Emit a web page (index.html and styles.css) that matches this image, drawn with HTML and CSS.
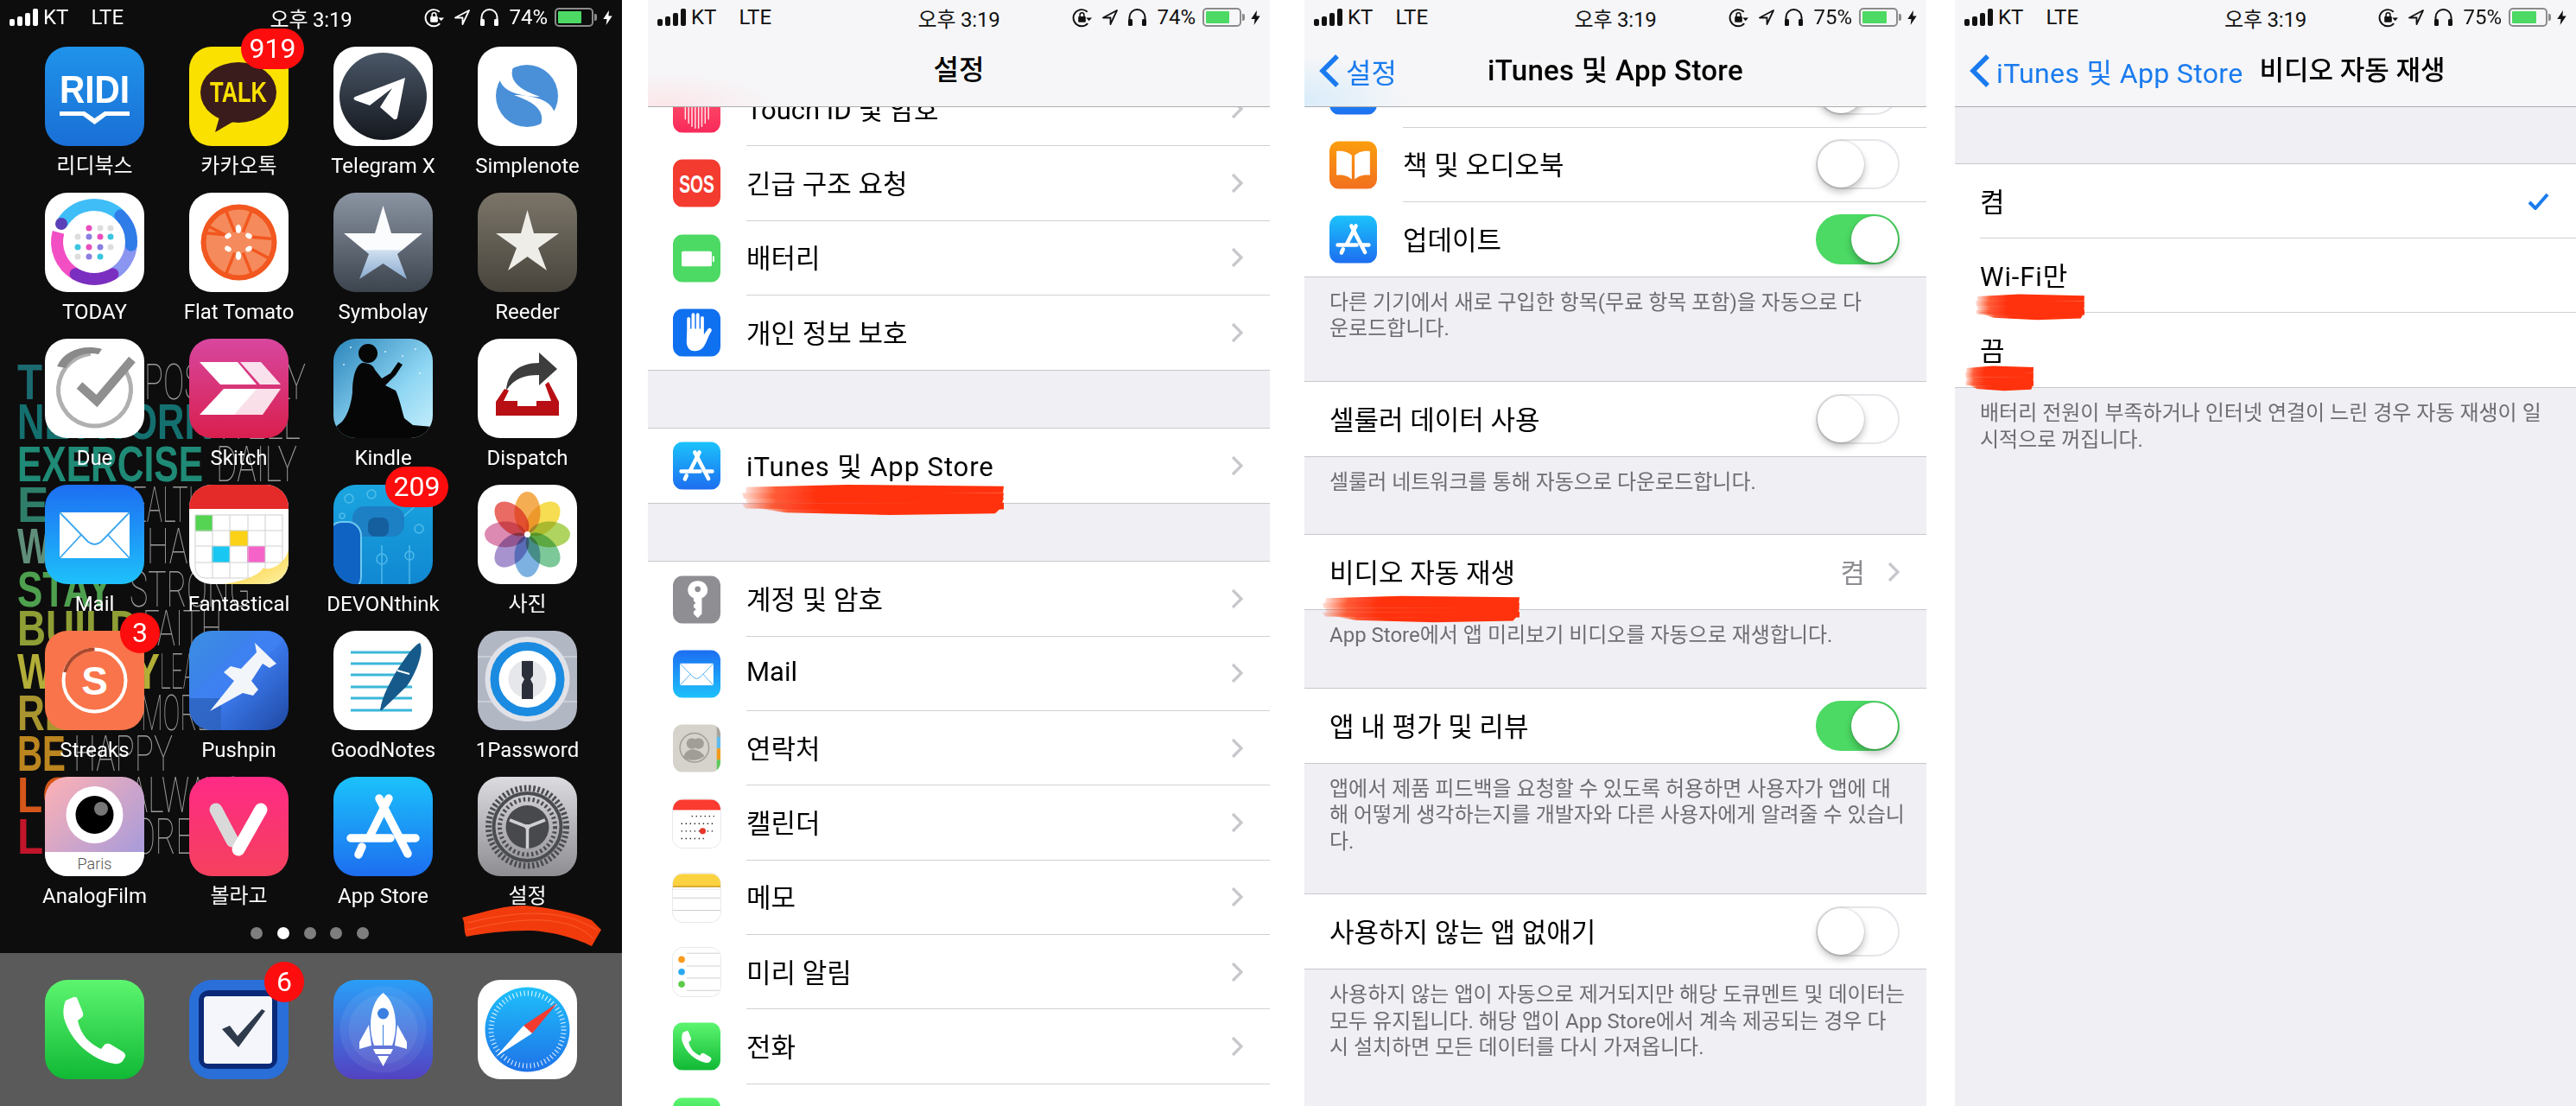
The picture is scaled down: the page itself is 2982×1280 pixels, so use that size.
FILE: index.html
```html
<!DOCTYPE html>
<html lang="ko">
<head>
<meta charset="utf-8">
<title>iOS 비디오 자동 재생 설정</title>
<link rel="stylesheet" href="styles.css">
</head>
<body>
<svg class="sprite" width="0" height="0" aria-hidden="true">
<defs>
<linearGradient id="g-ridi" x1="0" y1="0" x2="0" y2="1"><stop offset="0" stop-color="#1f93ea"/><stop offset="1" stop-color="#1a6fd6"/></linearGradient>
<linearGradient id="g-tg" x1="0" y1="0" x2="0" y2="1"><stop offset="0" stop-color="#4a5768"/><stop offset="1" stop-color="#15181e"/></linearGradient>
<linearGradient id="g-sym" x1="0" y1="0" x2="0" y2="1"><stop offset="0" stop-color="#8b94a2"/><stop offset="1" stop-color="#3c444e"/></linearGradient>
<linearGradient id="g-symstar" x1="0" y1="0" x2="0" y2="1"><stop offset=".6" stop-color="#fbfcfe"/><stop offset=".61" stop-color="#cfdfef"/><stop offset="1" stop-color="#8aaad0"/></linearGradient>
<linearGradient id="g-reed" x1="0" y1="0" x2="0" y2="1"><stop offset="0" stop-color="#7b7569"/><stop offset="1" stop-color="#48443c"/></linearGradient>
<linearGradient id="g-skitch" x1="0" y1="0" x2="0" y2="1"><stop offset="0" stop-color="#d8479f"/><stop offset="1" stop-color="#d91f4e"/></linearGradient>
<linearGradient id="g-kindle" x1="0" y1="0" x2="1" y2="1"><stop offset="0" stop-color="#2a84ba"/><stop offset=".6" stop-color="#8fd6f3"/><stop offset="1" stop-color="#c8f0fb"/></linearGradient>
<linearGradient id="g-mail" x1="0" y1="0" x2="0" y2="1"><stop offset="0" stop-color="#1d6ef2"/><stop offset="1" stop-color="#1ec1fb"/></linearGradient>
<linearGradient id="g-devon" x1="0" y1="0" x2="0" y2="1"><stop offset="0" stop-color="#1aa5df"/><stop offset="1" stop-color="#1088d2"/></linearGradient>
<linearGradient id="g-pin" x1="0" y1="0" x2="1" y2="1"><stop offset="0" stop-color="#3b8fe2"/><stop offset=".5" stop-color="#3c7bef"/><stop offset="1" stop-color="#1f48a2"/></linearGradient>
<linearGradient id="g-analog" x1="0" y1="0" x2="1" y2="1"><stop offset="0" stop-color="#ffb1b4"/><stop offset="1" stop-color="#9b98e0"/></linearGradient>
<linearGradient id="g-vllo" x1="0" y1="0" x2="0" y2="1"><stop offset="0" stop-color="#ff2a85"/><stop offset="1" stop-color="#f5415e"/></linearGradient>
<linearGradient id="g-app" x1="0" y1="0" x2="0" y2="1"><stop offset="0" stop-color="#1bc2fb"/><stop offset="1" stop-color="#1d6ef0"/></linearGradient>
<linearGradient id="g-set" x1="0" y1="0" x2="0" y2="1"><stop offset="0" stop-color="#dcdce0"/><stop offset="1" stop-color="#8d8d92"/></linearGradient>
<linearGradient id="g-phone" x1="0" y1="0" x2="0" y2="1"><stop offset="0" stop-color="#5df570"/><stop offset="1" stop-color="#10b935"/></linearGradient>
<linearGradient id="g-launch" x1="0" y1="0" x2="0" y2="1"><stop offset="0" stop-color="#2a9ef7"/><stop offset="1" stop-color="#5342c2"/></linearGradient>
<linearGradient id="g-safari" x1="0" y1="0" x2="0" y2="1"><stop offset="0" stop-color="#1fc0fa"/><stop offset="1" stop-color="#1e72e8"/></linearGradient>
<linearGradient id="g-books" x1="0" y1="0" x2="0" y2="1"><stop offset="0" stop-color="#fb9e0e"/><stop offset="1" stop-color="#f2701e"/></linearGradient>
<linearGradient id="g-curl" x1="0" y1="0" x2="1" y2="1"><stop offset="0" stop-color="#f7c71c"/><stop offset="1" stop-color="#fff2a8"/></linearGradient>
<linearGradient id="g-touch" x1="0" y1="0" x2="0" y2="1"><stop offset="0" stop-color="#ff5a6e"/><stop offset="1" stop-color="#f8295a"/></linearGradient>
<linearGradient id="g-fade" x1="0" y1="0" x2="1" y2="0"><stop offset="0" stop-color="#ff3208" stop-opacity=".15"/><stop offset=".12" stop-color="#ff3208" stop-opacity=".8"/><stop offset=".28" stop-color="#ff3208"/><stop offset="1" stop-color="#ff3208"/></linearGradient>
<filter id="f-soft"><feGaussianBlur stdDeviation=".7"/></filter>
</defs>

<symbol id="i-ridi" viewBox="0 0 115 115"><rect width="115" height="115" fill="url(#g-ridi)"/><text x="17" y="65" textLength="81" lengthAdjust="spacingAndGlyphs" class="logo-bold" font-size="44" fill="#fff">RIDI</text><path d="M17 75H46L57.5 83 69 75H98V80H71L57.5 90 44 80H17Z" fill="#fff"/></symbol>
<symbol id="i-kakao" viewBox="0 0 115 115"><rect width="115" height="115" fill="#fae100"/><ellipse cx="57" cy="53" rx="44" ry="35" fill="#3b1c1c"/><path d="M36 78 30 99 54 85Z" fill="#3b1c1c"/><text x="24" y="64" textLength="66" lengthAdjust="spacingAndGlyphs" class="logo-bold" font-size="33" fill="#fae100">TALK</text></symbol>
<symbol id="i-telegram" viewBox="0 0 115 115"><rect width="115" height="115" fill="#fff"/><circle cx="57.5" cy="57.5" r="50.5" fill="url(#g-tg)"/><path d="M83 36 25 58Q22 60 25 62L42 68 68 48 54 70 70 84Q73 85 74 82Z" fill="#fff"/></symbol>
<symbol id="i-simple" viewBox="0 0 115 115"><rect width="115" height="115" fill="#fff"/><circle cx="57" cy="57" r="36" fill="#4a90d9"/><path d="M15 12H50C40 20 36 32 44 42 50 50 62 54 72 58 50 58 32 52 27 42 24 36 24 32 27 28Z" fill="#fff"/><path d="M15 12H50C40 20 36 32 44 42 50 50 62 54 72 58 50 58 32 52 27 42 24 36 24 32 27 28Z" fill="#fff" transform="rotate(180 57 57)"/></symbol>
<symbol id="i-today" viewBox="0 0 115 115"><rect width="115" height="115" fill="#fff"/><g fill="none" stroke-width="14"><path d="M19.8 35.5A43 43 0 0 1 87.4 26.6" stroke="#3fbdf7"/><path d="M99.8 60.7A43 43 0 0 1 78.5 94.2" stroke="#8a96f0"/><path d="M35.5 94.2A43 43 0 0 1 15.5 45.9" stroke="#f24fc4"/><path d="M87.4 26.6A43 43 0 0 1 99.8 60.7" stroke="#2f7be8" stroke-linecap="round"/><path d="M35.5 94.2A43 43 0 0 0 78.5 94.2" stroke="#7b2fc0" stroke-linecap="round"/></g><circle cx="19" cy="36" r="7" fill="#5a3fb8"/><circle cx="51" cy="41" r="3.5" fill="#e84fbd"/><circle cx="64" cy="41" r="3.5" fill="#ddd"/><circle cx="76" cy="41" r="3.5" fill="#ddd"/><circle cx="38" cy="51" r="3.5" fill="#ddd"/><circle cx="51" cy="51" r="3.5" fill="#8a7fe0"/><circle cx="64" cy="51" r="3.5" fill="#e84fbd"/><circle cx="76" cy="51" r="3.5" fill="#3cc5e0"/><circle cx="38" cy="63" r="3.5" fill="#3cc5e0"/><circle cx="51" cy="63" r="3.5" fill="#e84fbd"/><circle cx="64" cy="63" r="3.5" fill="#8a7fe0"/><circle cx="76" cy="63" r="3.5" fill="#ddd"/><circle cx="38" cy="74" r="3.5" fill="#ddd"/><circle cx="51" cy="74" r="3.5" fill="#8a7fe0"/><circle cx="64" cy="74" r="3.5" fill="#3cc5e0"/></symbol>
<symbol id="i-tomato" viewBox="0 0 115 115"><rect width="115" height="115" fill="#fff"/><circle cx="57.5" cy="57.5" r="44" fill="#f2571f"/><circle cx="57.5" cy="57.5" r="38" fill="#f58b5c"/><g stroke="#f2571f" stroke-width="3.5"><path d="M20 50H95" transform="rotate(5 57.5 50)"/><path d="M57.5 19V96" transform="rotate(22 57.5 57.5)"/><path d="M57.5 19V96" transform="rotate(-22 57.5 57.5)"/><path d="M57.5 19V96" transform="rotate(-62 57.5 57.5)"/></g><circle cx="57.5" cy="57.5" r="13" fill="#f58b5c"/><g fill="#fff"><ellipse cx="57" cy="42" rx="3.2" ry="5"/><ellipse cx="57" cy="73" rx="3.2" ry="5"/><ellipse cx="45" cy="50" rx="3" ry="4" transform="rotate(60 45 50)"/><ellipse cx="69" cy="50" rx="3" ry="4" transform="rotate(-60 69 50)"/><ellipse cx="45" cy="65" rx="3" ry="4" transform="rotate(-60 45 65)"/><ellipse cx="69" cy="65" rx="3" ry="4" transform="rotate(60 69 65)"/></g></symbol>
<symbol id="i-symbolay" viewBox="0 0 115 115"><rect width="115" height="115" fill="url(#g-sym)"/><path d="M57.5 15 67 47H103L74 71 85 100 57.5 82 30 100 41 71 12 47H48Z" fill="url(#g-symstar)"/></symbol>
<symbol id="i-reeder" viewBox="0 0 115 115"><rect width="115" height="115" fill="url(#g-reed)"/><path d="M57.5 20 65 47H94L70 64 80 90 57.5 74 35 90 45 64 21 47H50Z" fill="#efede8"/></symbol>
<symbol id="i-due" viewBox="0 0 115 115"><rect width="115" height="115" fill="#fff"/><circle cx="57.5" cy="59" r="42" fill="none" stroke="#b0b0b0" stroke-width="5" stroke-dasharray="215 50" transform="rotate(-30 57.5 59)"/><path d="M14 32C22 14 44 6 66 12L62 18C46 14 30 22 24 34Z" fill="#8a8a8a"/><path d="M40 54 60 72 101 24" fill="none" stroke="#8f8f8f" stroke-width="10"/></symbol>
<symbol id="i-skitch" viewBox="0 0 115 115"><rect width="115" height="115" fill="url(#g-skitch)"/><g fill="#fff"><path d="M12 27H56L78 53H36Z"/><path d="M59 27H83L106 53H82Z" opacity=".85"/><path d="M40 58H78L52 88H12Z"/><path d="M66 58H106L85 88H46Z" opacity=".85"/></g></symbol>
<symbol id="i-kindle" viewBox="0 0 115 115"><rect width="115" height="115" fill="url(#g-kindle)"/><g fill="#fff" opacity=".8"><circle cx="20" cy="10" r="1"/><circle cx="60" cy="15" r="1"/><circle cx="95" cy="12" r="1"/><circle cx="80" cy="20" r="1"/><circle cx="100" cy="40" r="1"/><circle cx="12" cy="30" r="1"/></g><circle cx="40" cy="17" r="11" fill="#060606"/><path d="M33 28C24 32 22 50 22 62 20 80 15 90 10 96L0 104V115H115V102L92 100 82 92C78 78 76 68 72 60L60 54 72 42 80 30 75 27 66 40 56 46 48 36C46 30 40 28 33 28Z" fill="#060606"/></symbol>
<symbol id="i-dispatch" viewBox="0 0 115 115"><rect width="115" height="115" fill="#fff"/><path d="M33 60C34 40 48 28 71 28V16L92 35 71 54V42C54 42 42 46 33 60Z" fill="#3d3d3d"/><path d="M31 58 21 73V89H94V73L82 50 78 53 85 72H68V78H46V72H30L36 60Z" fill="#b70f14"/></symbol>
<symbol id="i-mail" viewBox="0 0 115 115"><rect width="115" height="115" fill="url(#g-mail)"/><rect x="17" y="32" width="81" height="53" fill="#fff"/><path d="M17 32 50 66Q57.5 72 65 66L98 32M17 85 42 58M98 85 73 58" fill="none" stroke="#3ba6ee" stroke-width="1.8"/></symbol>
<symbol id="i-fantastical" viewBox="0 0 115 115"><rect width="115" height="115" fill="#fff"/><rect width="115" height="28" fill="#e52a2a"/><rect x="7" y="35" width="20" height="19" fill="#54d452"/><rect x="47" y="53" width="21" height="18" fill="#fbd218"/><rect x="26" y="71" width="21" height="19" fill="#18c8f2"/><rect x="67" y="71" width="21" height="19" fill="#f563c9"/><path d="M7 35H108V108M7 53H108M7 71H108M7 90H108M7 35V95Q7 108 20 108H90M27 35V108M47 35V108M68 35V108M88 35V108" fill="none" stroke="#cfcfcf" stroke-width="1"/><path d="M115 75C110 95 90 100 86 96 80 106 60 112 40 115H115Z" fill="url(#g-curl)"/></symbol>
<symbol id="i-devon" viewBox="0 0 115 115"><rect width="115" height="115" fill="url(#g-devon)"/><g fill="none" stroke="#5fc5ee" stroke-width="1.5" opacity=".8"><circle cx="18" cy="16" r="5"/><circle cx="44" cy="11" r="5"/><circle cx="10" cy="36" r="3"/><circle cx="99" cy="51" r="5"/><circle cx="56" cy="86" r="6"/><circle cx="88" cy="82" r="5"/><path d="M56 70V115M88 70V115M100 20 72 45"/></g><rect x="22" y="25" width="60" height="35" rx="14" fill="#1d7fc4"/><rect x="40" y="38" width="24" height="22" rx="8" fill="#155f9e"/><rect x="-6" y="43" width="38" height="80" rx="16" fill="#0f63c3" stroke="#6fc8f0" stroke-width="2"/></symbol>
<symbol id="i-photos" viewBox="0 0 115 115"><rect width="115" height="115" fill="#fff"/><g class="petals"><ellipse cx="57.5" cy="32" rx="15" ry="24" fill="#f4a23c"/><ellipse cx="57.5" cy="32" rx="15" ry="24" fill="#f5d93a" transform="rotate(45 57.5 57.5)"/><ellipse cx="57.5" cy="32" rx="15" ry="24" fill="#a6cf4b" transform="rotate(90 57.5 57.5)"/><ellipse cx="57.5" cy="32" rx="15" ry="24" fill="#6cc18a" transform="rotate(135 57.5 57.5)"/><ellipse cx="57.5" cy="32" rx="15" ry="24" fill="#6aa7dd" transform="rotate(180 57.5 57.5)"/><ellipse cx="57.5" cy="32" rx="15" ry="24" fill="#9b86c9" transform="rotate(225 57.5 57.5)"/><ellipse cx="57.5" cy="32" rx="15" ry="24" fill="#d87aa8" transform="rotate(270 57.5 57.5)"/><ellipse cx="57.5" cy="32" rx="15" ry="24" fill="#e8574e" transform="rotate(315 57.5 57.5)"/></g><circle cx="57.5" cy="57.5" r="3.5" fill="#fff"/></symbol>
<symbol id="i-streaks" viewBox="0 0 115 115"><rect width="115" height="115" fill="#f9744a"/><circle cx="57.5" cy="57.5" r="36" fill="none" stroke="#fff" stroke-width="4"/><path d="M23 48A36 36 0 0 1 57.5 21.5" fill="none" stroke="#a9482c" stroke-width="4"/><text x="57.5" y="74" text-anchor="middle" class="logo-bold" font-size="46" fill="#fff">S</text></symbol>
<symbol id="i-pushpin" viewBox="0 0 115 115"><rect width="115" height="115" fill="url(#g-pin)"/><path d="M0 78 78 0H115V5L5 115H0Z" fill="#3f82f2" opacity=".7"/><path d="M0 78H37V115H0Z" fill="#2d62bd" opacity=".8"/><path d="M76 14 101 38 93 43 85 38 72 58 80 68 74 75 62 72 24 93 52 58 40 48 48 41 60 44 78 25Z" fill="#f2f5fa"/></symbol>
<symbol id="i-goodnotes" viewBox="0 0 115 115"><rect width="115" height="115" fill="#fff"/><path d="M20 25H91M20 38H91M20 51H91M20 65H91M20 78H91M20 92H91" stroke="#3bb7d9" stroke-width="3"/><path d="M100 14C106 24 94 52 85 64L56 92 54 92C56 76 66 58 76 42 84 30 92 18 100 14Z" fill="#155a8a"/><path d="M74 46 88 50" stroke="#fff" stroke-width="2"/></symbol>
<symbol id="i-1pass" viewBox="0 0 115 115"><rect width="115" height="115" fill="#b2b7c4"/><path d="M0 30H115M0 82H115" stroke="#c9cdd6" stroke-width="2"/><circle cx="57.5" cy="56" r="49" fill="#e0e2e8"/><circle cx="57.5" cy="56" r="38" fill="#fff" stroke="#1a8be0" stroke-width="10"/><circle cx="57.5" cy="56" r="22" fill="#e6e7ea"/><path d="M51 35H64V52L61 56 64 62V79H51V62L54 56 51 52Z" fill="#2a2f3a"/></symbol>
<symbol id="i-analog" viewBox="0 0 115 115"><rect width="115" height="115" fill="url(#g-analog)"/><rect y="87" width="115" height="28" fill="#fff"/><circle cx="57.5" cy="44" r="33" fill="#fff"/><circle cx="57.5" cy="44" r="22" fill="#000"/><circle cx="65" cy="37" r="8" fill="#777"/><text x="57.5" y="107" text-anchor="middle" class="logo-thin" font-size="18" fill="#555">Paris</text></symbol>
<symbol id="i-vllo" viewBox="0 0 115 115"><rect width="115" height="115" fill="url(#g-vllo)"/><path d="M31 38 50 74" stroke="#d9d9d9" stroke-width="15" stroke-linecap="round"/><path d="M83 38 57 84" stroke="#fff" stroke-width="15" stroke-linecap="round"/></symbol>
<symbol id="i-appstore" viewBox="0 0 115 115"><rect width="115" height="115" fill="url(#g-app)"/><g stroke="#fff" stroke-width="9.5" stroke-linecap="round" fill="none"><path d="M53 25 86 89"/><path d="M64 25 42 69"/><path d="M20 71H66M80 71H95"/><path d="M29 90 33 81"/></g></symbol>
<symbol id="i-settings" viewBox="0 0 115 115"><rect width="115" height="115" fill="url(#g-set)"/><g fill="none" stroke="#4b4c50"><circle cx="57.5" cy="58" r="45" stroke-width="7" stroke-dasharray="2.6 2.6"/><circle cx="57.5" cy="58" r="39" stroke-width="4"/><circle cx="57.5" cy="58" r="32" stroke-width="5" stroke-dasharray="2.4 3"/></g><circle cx="57.5" cy="58" r="25" fill="#48494d"/><path d="M57.5 58 37 50M57.5 58 78 50M57.5 58V83" stroke="#cfcfd3" stroke-width="3.5"/><circle cx="57.5" cy="58" r="3" fill="#cfcfd3"/></symbol>
<symbol id="i-phone" viewBox="0 0 115 115"><rect width="115" height="115" fill="url(#g-phone)"/><path d="M24 24 33 20Q37 19 38 23L44 38Q45 42 42 44L38 47Q40 58 48 68 56 76 65 80L69 75Q71 73 75 74L90 83Q94 86 93 89L90 94Q86 98 80 97C55 93 30 72 22 44 20 32 24 24 24 24Z" fill="#fff"/></symbol>
<symbol id="i-things" viewBox="0 0 115 115"><rect width="115" height="115" fill="#2a6fd8"/><rect x="11" y="12" width="91" height="91" rx="12" fill="#0a2a78"/><rect x="17" y="19" width="79" height="78" rx="4" fill="#f4f6fb"/><path d="M38 57 47 53 56 65 84 34 88 36 57 78Z" fill="#2f3b4d"/></symbol>
<symbol id="i-launch" viewBox="0 0 115 115"><rect width="115" height="115" fill="url(#g-launch)"/><circle cx="57.5" cy="57.5" r="50" fill="#fff" opacity=".07"/><circle cx="57.5" cy="57.5" r="40" fill="#fff" opacity=".07"/><path d="M57.5 15C67 22 72 36 72 52 72 62 70 70 68 76H47C45 70 43 62 43 52 43 36 48 22 57.5 15Z" fill="#fff"/><circle cx="57.5" cy="39" r="6.5" fill="#3b7fe0"/><path d="M57 52H58V76H57Z" fill="#3b7fe0"/><path d="M41 52 30 72 30 80 44 76ZM74 52 85 72 85 80 71 76Z" fill="#fff"/><path d="M46 80H69L66 86H49ZM51 88H64L57.5 100Z" fill="#fff"/></symbol>
<symbol id="i-safari" viewBox="0 0 115 115"><rect width="115" height="115" fill="#fff"/><circle cx="57.5" cy="57.5" r="49" fill="url(#g-safari)"/><circle cx="57.5" cy="57.5" r="42" fill="none" stroke="#fff" stroke-width="6" stroke-dasharray="1.1 3.3" opacity=".85"/><path d="M92 27 63 62 53 53Z" fill="#f43b30"/><path d="M21 89 63 62 53 53Z" fill="#fff"/></symbol>
<symbol id="i-touch" viewBox="0 0 115 115"><rect width="115" height="115" fill="url(#g-touch)"/><g fill="none" stroke="#fff" stroke-width="3" stroke-linecap="round" opacity=".9"><path d="M38 92V50M46 100V50M54 104V50M62 104V50M70 100V50M78 92V50M30 82V50M86 82V50"/></g></symbol>
<symbol id="i-sos" viewBox="0 0 115 115"><rect width="115" height="115" fill="#f33b30"/><text x="15" y="80" textLength="85" lengthAdjust="spacingAndGlyphs" class="logo-bold" font-size="60" fill="#fff">SOS</text></symbol>
<symbol id="i-battery" viewBox="0 0 115 115"><rect width="115" height="115" fill="#4cd964"/><rect x="21" y="40" width="73" height="37" rx="4" fill="#fff"/><rect x="96" y="52" width="4" height="14" fill="#fff"/></symbol>
<symbol id="i-hand" viewBox="0 0 115 115"><rect width="115" height="115" fill="#0f70f0"/><path d="M34 50V24a4 4 0 0 1 8 0V48H45V14a4 4 0 0 1 8 0V48H56V14a4 4 0 0 1 8 0V48H67V22a4 4 0 0 1 8 0V62L85 48C90 43 97 50 92 56 84 68 82 82 74 92 68 100 60 102 52 102 40 102 33 92 33 80Z" fill="#fff"/></symbol>
<symbol id="i-key" viewBox="0 0 115 115"><rect width="115" height="115" fill="#8e8e93"/><path d="M60 12C74 12 84 22 84 34 84 44 78 50 70 54V92L60 102 50 92V86L56 81 50 76V70L55 66 50 60V54C42 50 36 44 36 34 36 22 46 12 60 12Z" fill="#fff"/><circle cx="60" cy="32" r="7" fill="#8e8e93"/></symbol>
<symbol id="i-contacts" viewBox="0 0 115 115"><rect width="115" height="115" fill="#d5d3cb"/><rect x="106" y="0" width="9" height="30" fill="#a9a59c"/><rect x="106" y="30" width="9" height="28" fill="#5fbcec"/><rect x="106" y="58" width="9" height="27" fill="#f39a1e"/><rect x="106" y="85" width="9" height="30" fill="#5ec95c"/><circle cx="52" cy="56" r="35" fill="none" stroke="#a19e98" stroke-width="3"/><circle cx="46" cy="46" r="13" fill="#a19e98"/><circle cx="62" cy="46" r="13" fill="#a19e98"/><path d="M25 80C28 66 40 60 46 60 54 60 66 62 76 76 66 88 36 90 25 80Z" fill="#a19e98"/></symbol>
<symbol id="i-calendar" viewBox="0 0 115 115"><rect width="115" height="115" fill="#fff"/><rect width="115" height="25" fill="#fb3a30"/><path d="M45 40H100M20 58H100M20 76H100M20 94H75" stroke="#222" stroke-width="3" stroke-dasharray="3 7.5" fill="none"/><circle cx="72" cy="76" r="7.5" fill="#e8352c"/></symbol>
<symbol id="i-notes" viewBox="0 0 115 115"><rect width="115" height="115" fill="#fff"/><rect width="115" height="31" fill="#fbd23f"/><rect y="29" width="115" height="3" fill="#c79a20"/><path d="M0 37H115" stroke="#bbb" stroke-width="1.5" stroke-dasharray="2 2.5"/><path d="M0 58H115M0 88H115" stroke="#c9c9c9" stroke-width="2"/></symbol>
<symbol id="i-remind" viewBox="0 0 115 115"><rect width="115" height="115" fill="#fff"/><path d="M33 12H115M33 43H115M33 72H115M33 102H115" stroke="#d0d0d0" stroke-width="2"/><circle cx="21" cy="27" r="8" fill="#fb9b1f"/><circle cx="21" cy="57" r="8" fill="#2aa9f0"/><circle cx="21" cy="87" r="8" fill="#5ecb4a"/></symbol>
<symbol id="i-messages" viewBox="0 0 115 115"><rect width="115" height="115" fill="url(#g-phone)"/><ellipse cx="57.5" cy="54" rx="42" ry="34" fill="#fff"/></symbol>
<symbol id="i-books" viewBox="0 0 115 115"><rect width="115" height="115" fill="url(#g-books)"/><path d="M54 34C46 26 30 22 17 24V82C30 80 46 84 54 92ZM61 34C69 26 85 22 98 24V82C85 80 69 84 61 92Z" fill="#fff"/></symbol>

<symbol id="brush" viewBox="0 0 300 40" preserveAspectRatio="none"><g fill="url(#g-fade)" filter="url(#f-soft)"><path d="M5 5 120 2 300 4 299 12 4 12Z"/><path d="M0 12 150 11 300 12 299 19 2 19Z"/><path d="M4 19 300 18 298 25 6 25Z"/><path d="M0 25 300 24 300 32 180 33 4 31Z"/><path d="M20 31 170 32 296 31 290 37 170 39 50 36Z"/></g></symbol>
<symbol id="brush-wave" viewBox="0 0 161 47" preserveAspectRatio="none"><path d="M0 14C30 6 50 0 72 0 100 2 130 8 150 17L161 28 150 47C130 37 100 29 75 29 50 29 25 32 5 36 1 30 4 20 0 14Z" fill="#f23a0c" filter="url(#f-soft)"/><g fill="none" stroke="#ff6a3c" stroke-width="1" opacity=".7"><path d="M6 20C40 12 70 7 100 10S140 20 156 28"/><path d="M6 28C40 20 76 14 104 18S140 28 152 38"/></g></symbol>

<symbol id="s-rot" viewBox="0 0 24 24"><path d="M18.5 5A10 10 0 1 0 19 19" fill="none" stroke="currentColor" stroke-width="2"/><path d="M20.5 16 24 12H17Z" fill="currentColor"/><rect x="7.5" y="10.5" width="9" height="7" rx="1" fill="currentColor"/><path d="M9.5 11V8.5a2.5 2.5 0 0 1 5 0V11" fill="none" stroke="currentColor" stroke-width="1.6"/></symbol>
<symbol id="s-loc" viewBox="0 0 18 18"><path d="M17 1 1 9.5 9.5 9.5 9.5 17Z" fill="none" stroke="currentColor" stroke-width="1.8" stroke-linejoin="round"/></symbol>
<symbol id="s-head" viewBox="0 0 23 22"><path d="M2.5 14V11a9 9 0 0 1 18 0V14" fill="none" stroke="currentColor" stroke-width="2"/><rect x="1" y="13" width="5" height="8" rx="1.5" fill="currentColor"/><rect x="17" y="13" width="5" height="8" rx="1.5" fill="currentColor"/></symbol>
<symbol id="s-bolt" viewBox="0 0 11 18"><path d="M7 0 0 10.5H4.5L3.5 18 11 7H6.5Z" fill="currentColor"/></symbol>
<symbol id="chev" viewBox="0 0 14 24"><path d="M2 2 12 12 2 22" fill="none" stroke="#c7c7cc" stroke-width="3.2"/></symbol>
<symbol id="back" viewBox="0 0 24 40"><path d="M21 3 4 20 21 37" fill="none" stroke="#1a7bee" stroke-width="5.5"/></symbol>
</svg>

<main class="screens">

<section class="screen home">
<svg class="wall" viewBox="0 0 720 1280" width="720" height="1280" aria-hidden="true">
<g class="wall-bold">
<text x="20" y="462" textLength="145" lengthAdjust="spacingAndGlyphs" fill="#1b6a70">THINK</text>
<text x="20" y="508" textLength="225" lengthAdjust="spacingAndGlyphs" fill="#14706f">NETWORK</text>
<text x="20" y="557" textLength="215" lengthAdjust="spacingAndGlyphs" fill="#1f8a76">EXERCISE</text>
<text x="20" y="604" textLength="105" lengthAdjust="spacingAndGlyphs" fill="#2f7e6a">EAT</text>
<text x="20" y="652" textLength="130" lengthAdjust="spacingAndGlyphs" fill="#5f8f7a">WORK</text>
<text x="20" y="702" textLength="110" lengthAdjust="spacingAndGlyphs" fill="#4ea04e">STAY</text>
<text x="20" y="747" textLength="140" lengthAdjust="spacingAndGlyphs" fill="#8f9e35">BUILD</text>
<text x="20" y="797" textLength="165" lengthAdjust="spacingAndGlyphs" fill="#b2ae38">WISELY</text>
<text x="20" y="845" textLength="125" lengthAdjust="spacingAndGlyphs" fill="#a9952f">READ</text>
<text x="20" y="892" textLength="56" lengthAdjust="spacingAndGlyphs" fill="#bb851f">BE</text>
<text x="20" y="940" textLength="130" lengthAdjust="spacingAndGlyphs" fill="#d5561a">LOVE</text>
<text x="20" y="988" textLength="110" lengthAdjust="spacingAndGlyphs" fill="#c2152a">LIVE</text>
</g>
<g class="wall-thin">
<text x="167" y="462" textLength="187" lengthAdjust="spacingAndGlyphs">POSITIVELY</text>
<text x="250" y="508" textLength="98" lengthAdjust="spacingAndGlyphs">WELL</text>
<text x="250" y="557" textLength="94" lengthAdjust="spacingAndGlyphs">DAILY</text>
<text x="131" y="604" textLength="126" lengthAdjust="spacingAndGlyphs">HEALTHY</text>
<text x="170" y="652" textLength="95" lengthAdjust="spacingAndGlyphs">HARD</text>
<text x="150" y="702" textLength="140" lengthAdjust="spacingAndGlyphs">STRONG</text>
<text x="165" y="747" textLength="92" lengthAdjust="spacingAndGlyphs">FAITH</text>
<text x="185" y="797" textLength="75" lengthAdjust="spacingAndGlyphs">LEARN</text>
<text x="163" y="845" textLength="82" lengthAdjust="spacingAndGlyphs">MORE</text>
<text x="85" y="892" textLength="115" lengthAdjust="spacingAndGlyphs">HAPPY</text>
<text x="150" y="940" textLength="130" lengthAdjust="spacingAndGlyphs">ALWAYS</text>
<text x="135" y="988" textLength="155" lengthAdjust="spacingAndGlyphs">FOREVER</text>
</g>
</svg>
<div class="status status-dark">
  <div class="status-left"><span class="signal"><i></i><i></i><i></i><i></i></span><span>KT</span><span class="net">LTE</span></div>
  <div class="status-time">오후 3:19</div>
  <div class="status-right"><svg class="ic-rot"><use href="#s-rot"/></svg><svg class="ic-loc"><use href="#s-loc"/></svg><svg class="ic-head"><use href="#s-head"/></svg><span>74%</span><span class="bat"><span class="bat-fill"></span></span><svg class="ic-bolt"><use href="#s-bolt"/></svg></div>
</div>
<div class="apps">
  <div class="app"><svg class="app-ic"><use href="#i-ridi"/></svg><span class="app-name">리디북스</span></div>
  <div class="app"><svg class="app-ic"><use href="#i-kakao"/></svg><span class="badge badge-3">919</span><span class="app-name">카카오톡</span></div>
  <div class="app"><svg class="app-ic"><use href="#i-telegram"/></svg><span class="app-name">Telegram X</span></div>
  <div class="app"><svg class="app-ic"><use href="#i-simple"/></svg><span class="app-name">Simplenote</span></div>
  <div class="app"><svg class="app-ic"><use href="#i-today"/></svg><span class="app-name">TODAY</span></div>
  <div class="app"><svg class="app-ic"><use href="#i-tomato"/></svg><span class="app-name">Flat Tomato</span></div>
  <div class="app"><svg class="app-ic"><use href="#i-symbolay"/></svg><span class="app-name">Symbolay</span></div>
  <div class="app"><svg class="app-ic"><use href="#i-reeder"/></svg><span class="app-name">Reeder</span></div>
  <div class="app"><svg class="app-ic"><use href="#i-due"/></svg><span class="app-name">Due</span></div>
  <div class="app"><svg class="app-ic"><use href="#i-skitch"/></svg><span class="app-name">Skitch</span></div>
  <div class="app"><svg class="app-ic"><use href="#i-kindle"/></svg><span class="app-name">Kindle</span></div>
  <div class="app"><svg class="app-ic"><use href="#i-dispatch"/></svg><span class="app-name">Dispatch</span></div>
  <div class="app"><svg class="app-ic"><use href="#i-mail"/></svg><span class="app-name">Mail</span></div>
  <div class="app"><svg class="app-ic"><use href="#i-fantastical"/></svg><span class="app-name">Fantastical</span></div>
  <div class="app"><svg class="app-ic"><use href="#i-devon"/></svg><span class="badge badge-3">209</span><span class="app-name">DEVONthink</span></div>
  <div class="app"><svg class="app-ic"><use href="#i-photos"/></svg><span class="app-name">사진</span></div>
  <div class="app"><svg class="app-ic"><use href="#i-streaks"/></svg><span class="badge">3</span><span class="app-name">Streaks</span></div>
  <div class="app"><svg class="app-ic"><use href="#i-pushpin"/></svg><span class="app-name">Pushpin</span></div>
  <div class="app"><svg class="app-ic"><use href="#i-goodnotes"/></svg><span class="app-name">GoodNotes</span></div>
  <div class="app"><svg class="app-ic"><use href="#i-1pass"/></svg><span class="app-name">1Password</span></div>
  <div class="app"><svg class="app-ic"><use href="#i-analog"/></svg><span class="app-name">AnalogFilm</span></div>
  <div class="app"><svg class="app-ic"><use href="#i-vllo"/></svg><span class="app-name">볼라고</span></div>
  <div class="app"><svg class="app-ic"><use href="#i-appstore"/></svg><span class="app-name">App Store</span></div>
  <div class="app"><svg class="app-ic"><use href="#i-settings"/></svg><span class="app-name">설정</span></div>
</div>
<div class="dots"><i></i><i class="on"></i><i></i><i></i><i></i></div>
<div class="dock">
  <div class="app"><svg class="app-ic"><use href="#i-phone"/></svg></div>
  <div class="app"><svg class="app-ic"><use href="#i-things"/></svg><span class="badge">6</span></div>
  <div class="app"><svg class="app-ic"><use href="#i-launch"/></svg></div>
  <div class="app"><svg class="app-ic"><use href="#i-safari"/></svg></div>
</div>
<svg class="brush brush-home"><use href="#brush-wave"/></svg>
</section>

<section class="screen settings screen-2">
<header class="nav nav-pink">
  <div class="status">
    <div class="status-left"><span class="signal"><i></i><i></i><i></i><i></i></span><span>KT</span><span class="net">LTE</span></div>
    <div class="status-time">오후 3:19</div>
    <div class="status-right"><svg class="ic-rot"><use href="#s-rot"/></svg><svg class="ic-loc"><use href="#s-loc"/></svg><svg class="ic-head"><use href="#s-head"/></svg><span>74%</span><span class="bat"><span class="bat-fill"></span></span><svg class="ic-bolt"><use href="#s-bolt"/></svg></div>
  </div>
  <div class="nav-bar"><span></span><h1 class="nav-title">설정</h1><span></span></div>
</header>
<div class="group list-offset-2">
  <div class="row"><svg class="row-ic"><use href="#i-touch"/></svg><div class="row-body"><span class="row-label">Touch ID 및 암호</span><svg class="chev"><use href="#chev"/></svg></div></div>
  <div class="row"><svg class="row-ic"><use href="#i-sos"/></svg><div class="row-body"><span class="row-label">긴급 구조 요청</span><svg class="chev"><use href="#chev"/></svg></div></div>
  <div class="row"><svg class="row-ic"><use href="#i-battery"/></svg><div class="row-body"><span class="row-label">배터리</span><svg class="chev"><use href="#chev"/></svg></div></div>
  <div class="row"><svg class="row-ic"><use href="#i-hand"/></svg><div class="row-body"><span class="row-label">개인 정보 보호</span><svg class="chev"><use href="#chev"/></svg></div></div>
</div>
<div class="spacer"></div>
<div class="group">
  <div class="row"><svg class="row-ic"><use href="#i-appstore"/></svg><div class="row-body"><span class="row-label row-label-latin">iTunes 및 App Store</span><svg class="chev"><use href="#chev"/></svg></div></div>
</div>
<div class="spacer"></div>
<div class="group">
  <div class="row"><svg class="row-ic"><use href="#i-key"/></svg><div class="row-body"><span class="row-label">계정 및 암호</span><svg class="chev"><use href="#chev"/></svg></div></div>
  <div class="row"><svg class="row-ic"><use href="#i-mail"/></svg><div class="row-body"><span class="row-label">Mail</span><svg class="chev"><use href="#chev"/></svg></div></div>
  <div class="row"><svg class="row-ic"><use href="#i-contacts"/></svg><div class="row-body"><span class="row-label">연락처</span><svg class="chev"><use href="#chev"/></svg></div></div>
  <div class="row"><svg class="row-ic row-ic-light"><use href="#i-calendar"/></svg><div class="row-body"><span class="row-label">캘린더</span><svg class="chev"><use href="#chev"/></svg></div></div>
  <div class="row"><svg class="row-ic row-ic-light"><use href="#i-notes"/></svg><div class="row-body"><span class="row-label">메모</span><svg class="chev"><use href="#chev"/></svg></div></div>
  <div class="row"><svg class="row-ic row-ic-light"><use href="#i-remind"/></svg><div class="row-body"><span class="row-label">미리 알림</span><svg class="chev"><use href="#chev"/></svg></div></div>
  <div class="row"><svg class="row-ic"><use href="#i-phone"/></svg><div class="row-body"><span class="row-label">전화</span><svg class="chev"><use href="#chev"/></svg></div></div>
  <div class="row"><svg class="row-ic"><use href="#i-messages"/></svg><div class="row-body"></div></div>
</div>
<svg class="brush brush-itunes"><use href="#brush"/></svg>
</section>

<section class="screen settings screen-3">
<header class="nav nav-blue">
  <div class="status">
    <div class="status-left"><span class="signal"><i></i><i></i><i></i><i></i></span><span>KT</span><span class="net">LTE</span></div>
    <div class="status-time">오후 3:19</div>
    <div class="status-right"><svg class="ic-rot"><use href="#s-rot"/></svg><svg class="ic-loc"><use href="#s-loc"/></svg><svg class="ic-head"><use href="#s-head"/></svg><span>75%</span><span class="bat"><span class="bat-fill bat-fill-75"></span></span><svg class="ic-bolt"><use href="#s-bolt"/></svg></div>
  </div>
  <div class="nav-bar"><a class="nav-back"><svg class="back"><use href="#back"/></svg><span>설정</span></a><h1 class="nav-title nav-title-latin">iTunes 및 App Store</h1><span></span></div>
</header>
<div class="group list-offset-3">
  <div class="row"><svg class="row-ic"><use href="#i-appstore"/></svg><div class="row-body"><span class="row-label"></span><span class="toggle"></span></div></div>
  <div class="row"><svg class="row-ic"><use href="#i-books"/></svg><div class="row-body"><span class="row-label">책 및 오디오북</span><span class="toggle"></span></div></div>
  <div class="row"><svg class="row-ic"><use href="#i-appstore"/></svg><div class="row-body"><span class="row-label">업데이트</span><span class="toggle toggle-on"></span></div></div>
</div>
<p class="foot">다른 기기에서 새로 구입한 항목(무료 항목 포함)을 자동으로 다<br>운로드합니다.</p>
<div class="group">
  <div class="row"><div class="row-body"><span class="row-label">셀룰러 데이터 사용</span><span class="toggle"></span></div></div>
</div>
<p class="foot">셀룰러 네트워크를 통해 자동으로 다운로드합니다.</p>
<div class="group">
  <div class="row"><div class="row-body"><span class="row-label">비디오 자동 재생</span><span class="row-value">켬</span><svg class="chev"><use href="#chev"/></svg></div></div>
</div>
<p class="foot">App Store에서 앱 미리보기 비디오를 자동으로 재생합니다.</p>
<div class="group">
  <div class="row"><div class="row-body"><span class="row-label">앱 내 평가 및 리뷰</span><span class="toggle toggle-on"></span></div></div>
</div>
<p class="foot">앱에서 제품 피드백을 요청할 수 있도록 허용하면 사용자가 앱에 대<br>해 어떻게 생각하는지를 개발자와 다른 사용자에게 알려줄 수 있습니<br>다.</p>
<div class="group">
  <div class="row"><div class="row-body"><span class="row-label">사용하지 않는 앱 없애기</span><span class="toggle"></span></div></div>
</div>
<p class="foot">사용하지 않는 앱이 자동으로 제거되지만 해당 도큐멘트 및 데이터는<br>모두 유지됩니다. 해당 앱이 App Store에서 계속 제공되는 경우 다<br>시 설치하면 모든 데이터를 다시 가져옵니다.</p>
<svg class="brush brush-video"><use href="#brush"/></svg>
</section>

<section class="screen settings screen-4">
<header class="nav">
  <div class="status">
    <div class="status-left"><span class="signal"><i></i><i></i><i></i><i></i></span><span>KT</span><span class="net">LTE</span></div>
    <div class="status-time">오후 3:19</div>
    <div class="status-right"><svg class="ic-rot"><use href="#s-rot"/></svg><svg class="ic-loc"><use href="#s-loc"/></svg><svg class="ic-head"><use href="#s-head"/></svg><span>75%</span><span class="bat"><span class="bat-fill bat-fill-75"></span></span><svg class="ic-bolt"><use href="#s-bolt"/></svg></div>
  </div>
  <div class="nav-bar nav-bar-long"><a class="nav-back nav-back-latin"><svg class="back"><use href="#back"/></svg><span>iTunes 및 App Store</span></a><h1 class="nav-title">비디오 자동 재생</h1></div>
</header>
<div class="spacer spacer-top"></div>
<div class="group">
  <div class="row"><div class="row-body"><span class="row-label">켬</span><svg class="check" viewBox="0 0 25 20"><path d="M2 11 9 18 23 2" fill="none" stroke="#1a7bee" stroke-width="4"/></svg></div></div>
  <div class="row"><div class="row-body"><span class="row-label row-label-latin">Wi-Fi만</span></div></div>
  <div class="row"><div class="row-body"><span class="row-label">끔</span></div></div>
</div>
<p class="foot">배터리 전원이 부족하거나 인터넷 연결이 느린 경우 자동 재생이 일<br>시적으로 꺼집니다.</p>
<svg class="brush brush-wifi"><use href="#brush"/></svg>
<svg class="brush brush-off"><use href="#brush"/></svg>
</section>

</main>
</body>
</html>
```
FILE: styles.css
```css
* { box-sizing: border-box; }
html, body { margin: 0; padding: 0; background: #fff; }
body { width: 2982px; height: 1280px; overflow: hidden; font-family: Roboto, "Noto Sans CJK KR", sans-serif; }
.sprite { position: absolute; }
.screens { display: flex; height: 1280px; }
.screen { position: relative; width: 720px; height: 1280px; overflow: hidden; flex: none; }
.screen-2 { margin-left: 30px; }
.screen-3 { margin-left: 40px; }
.screen-4 { margin-left: 33px; width: 719px; }

/* status bar */
.status { display: grid; grid-template-columns: 1fr auto 1fr; align-items: center; height: 40px; padding: 0 11px; font-size: 24px; color: #111; }
.status-dark { color: #fff; position: relative; }
.status-left { display: flex; align-items: center; gap: 6px; }
.net { margin-left: 20px; }
.signal { display: flex; align-items: flex-end; gap: 3px; height: 20px; }
.signal i { display: block; width: 6px; background: currentColor; border-radius: 2px; }
.signal i:nth-child(1) { height: 8px; }
.signal i:nth-child(2) { height: 11px; }
.signal i:nth-child(3) { height: 15px; }
.signal i:nth-child(4) { height: 20px; }
.status-time { letter-spacing: -.2px; }
.status-right { display: flex; align-items: center; justify-content: flex-end; gap: 8px; }
.ic-rot { width: 23px; height: 23px; margin-right: 4px; }
.ic-loc { width: 18px; height: 18px; margin-right: 3px; }
.ic-head { width: 23px; height: 22px; margin-right: 3px; }
.ic-bolt { width: 11px; height: 17px; margin-left: -1px; }
.bat { position: relative; display: block; width: 45px; height: 22px; border: 2px solid #8b8b8b; border-radius: 5px; padding: 2px; margin-right: 4px; }
.bat::after { content: ""; position: absolute; right: -6px; top: 5px; width: 3px; height: 8px; background: #8b8b8b; border-radius: 0 2px 2px 0; }
.bat-fill { display: block; width: 74%; height: 100%; background: #4cd964; border-radius: 1px; }
.bat-fill-75 { width: 75%; }

/* home screen */
.home { background: #0d0d0d; display: flex; flex-direction: column; }
.wall { position: absolute; left: 0; top: 0; }
.wall-bold text { font-family: "Liberation Sans Narrow", "Liberation Sans", sans-serif; font-weight: 700; font-size: 58px; }
.wall-thin text { font-family: Roboto, sans-serif; font-weight: 100; font-size: 58px; fill: #9a9a9a; }
.apps { position: relative; display: grid; grid-template-columns: repeat(4, 115px); grid-auto-rows: 169px; column-gap: 52px; padding: 14px 0 0 52px; }
.app { position: relative; display: flex; flex-direction: column; align-items: center; width: 115px; }
.app-ic { display: block; flex: none; width: 115px; height: 115px; border-radius: 26px; }
.app-name { display: block; margin-top: 8px; height: 30px; line-height: 30px; font-size: 24px; color: #fff; white-space: nowrap; }
.badge { position: absolute; top: -21px; right: -18px; min-width: 46px; height: 47px; border-radius: 24px; background: #fd0d0d; color: #fff; font-size: 32px; line-height: 47px; text-align: center; }
.badge-3 { width: 73px; }
.dots { position: relative; display: flex; justify-content: center; gap: 16.6px; margin-top: 5px; padding-right: 3px; }
.dots i { display: block; width: 14px; height: 14px; border-radius: 50%; background: #7e7e7e; }
.dots i.on { background: #fff; }
.dock { position: relative; margin-top: auto; height: 177px; background: #5a5a5a; display: grid; grid-template-columns: repeat(4, 115px); column-gap: 52px; padding: 31px 0 0 52px; }
.petals { opacity: .88; }
.petals ellipse { mix-blend-mode: multiply; }
.logo-bold { font-family: "Liberation Sans", sans-serif; font-weight: 700; }
.logo-thin { font-family: Roboto, sans-serif; font-weight: 300; }

/* settings */
.settings { background: #efeff4; }
.nav { position: relative; z-index: 2; height: 124px; background: #f6f6f8; border-bottom: 1px solid #adadb0; }
.nav-pink { background: radial-gradient(ellipse 130px 40px at 20px 123px, #fbe6e9 0%, rgba(251,230,233,0) 100%), #f6f6f8; }
.nav-blue { background: radial-gradient(ellipse 120px 50px at 0 115px, #d9ecfa 0%, rgba(217,236,250,0) 100%), #f6f6f8; }
.nav-bar { display: grid; grid-template-columns: 1fr auto 1fr; align-items: center; height: 83px; }
.nav-bar-long { display: flex; }
.nav-title { margin: 0; font-size: 32px; font-weight: 500; color: #000; line-height: 83px; white-space: nowrap; }
.nav-title-latin { font-size: 33px; letter-spacing: .3px; }
.nav-bar-long .nav-title { margin-left: 19px; font-size: 31px; }
.nav-back { display: flex; align-items: center; gap: 7px; margin-left: 17px; color: #1a7bee; font-size: 32px; white-space: nowrap; }
.nav-back-latin { letter-spacing: .35px; }
.back { width: 24px; height: 40px; flex: none; }
.group { position: relative; background: #fff; box-shadow: 0 -1px 0 #c8c7cc, 0 1px 0 #c8c7cc; }
.list-offset-2 { margin-top: -41px; }
.list-offset-3 { margin-top: -62.4px; }
.row { display: flex; align-items: center; height: 86.3px; padding-left: 29px; }
.screen-3 .row, .screen-4 .row { height: 86px; }
.row-ic { flex: none; width: 55px; height: 56px; border-radius: 12px; margin-right: 30px; }
.row-ic-light { box-shadow: 0 0 0 1px #e9e9ec; }
.row-body { flex: 1; align-self: stretch; display: flex; align-items: center; padding-right: 31px; border-bottom: 1px solid #d1d1d5; min-width: 0; }
.row:last-child .row-body { border-bottom: 0; }
.row-label { flex: 1; padding-bottom: 3px; font-size: 31px; color: #000; white-space: nowrap; }
.row-label-latin { letter-spacing: .9px; }
.row-value { padding-bottom: 3px; font-size: 31px; color: #8e8e93; margin-right: 26px; }
.chev { flex: none; width: 14px; height: 24px; }
.check { flex: none; width: 25px; height: 20px; }
.spacer { height: 68px; }
.spacer-top { height: 66px; }
.foot { margin: 0; padding: 15px 29px 46px; font-size: 24px; line-height: 30.5px; color: #6d6d72; white-space: nowrap; }
.toggle { position: relative; flex: none; display: block; width: 97px; height: 58px; border-radius: 29px; border: 2px solid #e5e5ea; background: #fff; }
.toggle::after { content: ""; position: absolute; left: 0; top: 0; width: 54px; height: 54px; border-radius: 50%; background: #fff; box-shadow: 0 5px 8px rgba(0,0,0,.25), 0 0 2px rgba(0,0,0,.25); }
.toggle-on { background: #4cd964; border-color: #4cd964; }
.toggle-on::after { left: auto; right: 0; }

/* red marker strokes drawn over the screenshots */
.brush { position: absolute; z-index: 3; }
.brush-home { left: 535px; top: 1048px; width: 161px; height: 47px; }
.brush-itunes { left: 109px; top: 559px; width: 303px; height: 38px; }
.brush-video { left: 21px; top: 688px; width: 228px; height: 33px; }
.brush-wifi { left: 24px; top: 339px; width: 126px; height: 32px; }
.brush-off { left: 12px; top: 422px; width: 79px; height: 31px; }
```
